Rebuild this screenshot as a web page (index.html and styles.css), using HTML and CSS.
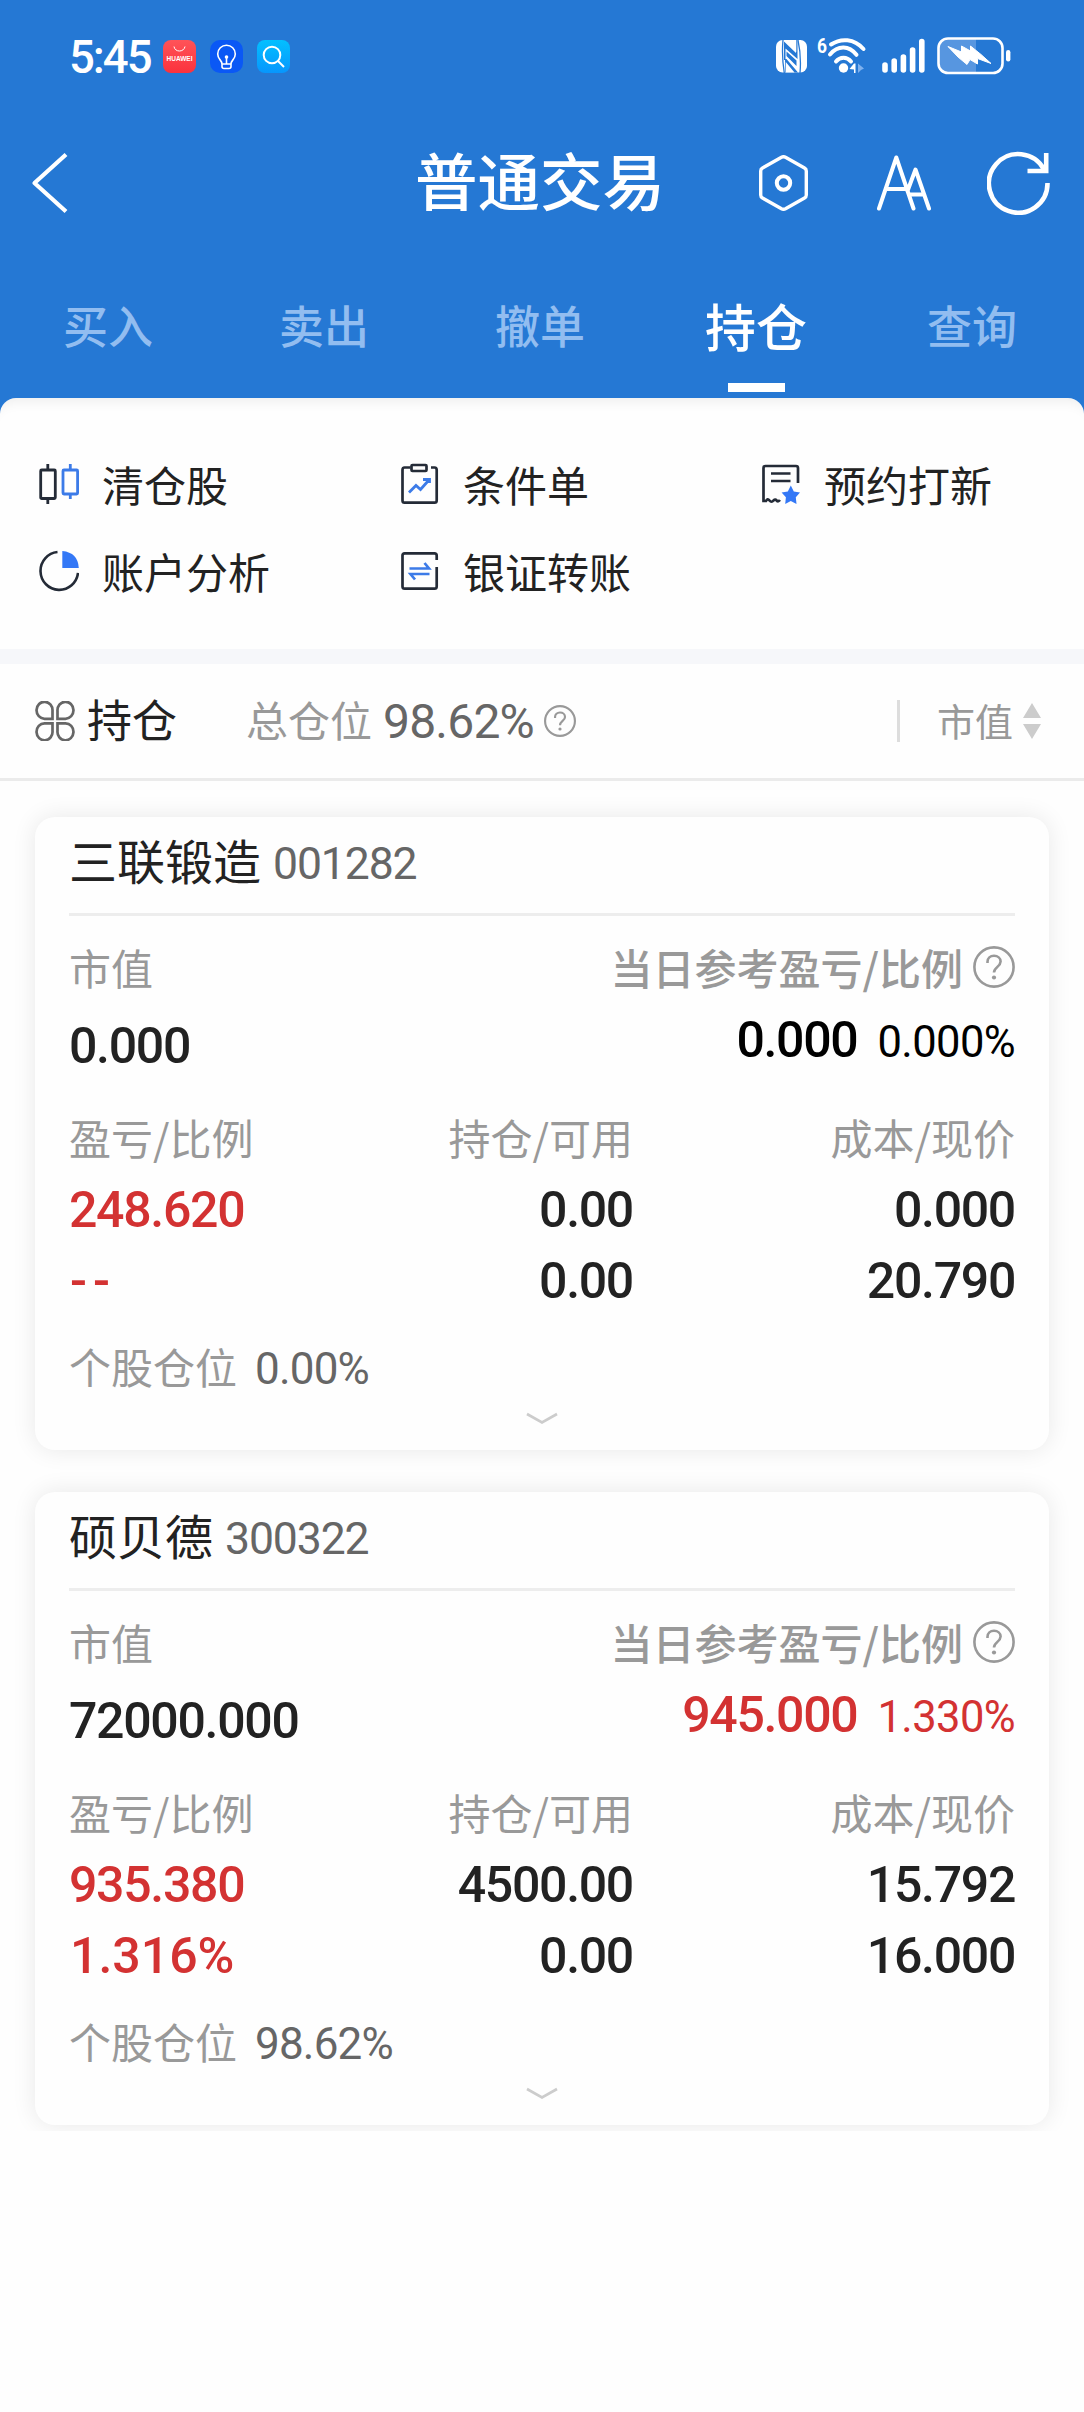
FILE: index.html
```html
<!DOCTYPE html>
<html lang="zh-CN">
<head>
<meta charset="utf-8">
<title>普通交易</title>
<link rel="stylesheet" href="styles.css">
</head>
<body>
<svg class="defs" width="0" height="0">
  <symbol id="help" viewBox="0 0 42 42">
    <circle cx="21" cy="21" r="19.6"/>
    <path d="M14.5 17v-1.2c0-3.6 2.8-6 6.5-6s6.600 2.400 6.600 5.800c0 5-6.600 5.600-6.600 11"/>
    <circle class="dot" cx="21" cy="31.500" r="2.100"/>
  </symbol>
</svg>

<header class="top">
  <div class="status">
    <span class="time">5:45</span>
    <div class="apps">
      <svg width="33" height="33" viewBox="0 0 33 33">
        <defs><linearGradient id="red" x2="0" y2="1"><stop stop-color="#ff5358"/><stop offset="1" stop-color="#fb323d"/></linearGradient></defs>
        <rect width="33" height="33" rx="8" fill="url(#red)"/>
        <path d="M11 6.500c.8 6 10 6 11 0" fill="none" stroke="#fff" stroke-width="1"/>
        <text class="brand" x="16.500" y="21" textLength="26" lengthAdjust="spacingAndGlyphs">HUAWEI</text>
      </svg>
      <svg width="33" height="33" viewBox="0 0 33 33">
        <rect width="33" height="33" rx="10" fill="#0a58f5"/>
        <g fill="none" stroke="#fff" stroke-width="1.600">
          <path d="M12 24c0-4-4.300-4.500-4.300-10a8.800 8.800 0 0 1 17.600 0c0 5.500-4.300 6-4.300 10zM12 24v2.500q0 2 2 2h5q2 0 2-2V24M16.500 17v7"/>
        </g>
        <circle cx="16.500" cy="17" r="1.800" fill="#fff"/>
      </svg>
      <svg width="33" height="33" viewBox="0 0 33 33">
        <defs><linearGradient id="cyan" x2="0" y2="1"><stop stop-color="#03c0ff"/><stop offset="1" stop-color="#0796fd"/></linearGradient></defs>
        <rect width="33" height="33" rx="8" fill="url(#cyan)"/>
        <g fill="none" stroke="#fff" stroke-width="2"><circle cx="15" cy="15" r="8.300"/><path d="M21 21l6 6"/></g>
      </svg>
    </div>
    <div class="signals">
      <svg width="31" height="33" viewBox="0 0 31 33">
        <rect width="31" height="32.500" rx="6.500" fill="#fff"/>
        <path fill="none" stroke="#2578d4" stroke-width="1.300" d="M7 0Q5.500 16 8.300 33M24 33Q25.500 16 22 0"/>
        <path fill="#2578d4" d="M8 1.500 20 13V0H21.500V19L9.500 8.500ZM10.500 11.500 20.500 20.500V26L10.500 16ZM10.500 19 22 32.500H9.300L9 19Z M8 2 9.500 3.500V20H8Z"/>
        <path fill="#fff" d="M9.800 22 18.500 32.500H9.800ZM20.300 0V12L9 0Z"/>
      </svg>
      <svg class="wifi" width="49" height="39" viewBox="0 -2 49 39">
        <text class="gen" x="0" y="16" textLength="10" lengthAdjust="spacingAndGlyphs">6</text>
        <g fill="none" stroke="#fff" stroke-width="4" stroke-linecap="round">
          <path d="M14 7.500C24 .8 37 1.500 46.500 12" />
          <path d="M13 17.500c8-9.500 19-9 26.500.300M19 24.500c4-5 11-5 15 0"/>
        </g>
        <circle cx="26.500" cy="31" r="4.700" fill="#fff"/>
        <path d="M32.500 32l4.500-5.500h1.500V36H37V32.500z" fill="#fff"/>
        <path d="M41 26.500l6 5-3 1.500-3 3z" fill="#7fb1ee"/>
      </svg>
      <svg class="bars" width="43" height="35" viewBox="0 0 43 35">
        <path d="M3 27v5M12.200 23v9M21.400 19v13M30.600 12v20M39.800 3.500V32" stroke="#fff" stroke-width="5.600" stroke-linecap="round"/>
      </svg>
      <svg class="battery" width="74" height="38" viewBox="0 0 74 38">
        <path d="M10 1.500H39V36H10Q1.500 35 1.500 27V10Q1.500 2 10 1.500" fill="#5796e0"/>
        <rect x="1.500" y="1.500" width="64" height="34.500" rx="9.500" fill="none" stroke="#fff" stroke-width="2.600"/>
        <path d="M11 9.500 24.500 15V9L33.500 14V9L44 17.500 54 26.500 40.500 21.500V27L33 22.500 30 27.500 21 20Z" fill="#fff" stroke="#fff" stroke-width="1" stroke-linejoin="round"/>
        <rect x="69" y="13" width="4.400" height="11.500" rx="2.200" fill="#fff"/>
      </svg>
    </div>
  </div>

  <div class="titlebar">
    <svg class="back" width="38" height="62" viewBox="0 0 38 62"><path d="M35 2.500 3.500 31 35 59.500" fill="none" stroke="#fff" stroke-width="4.200" stroke-linejoin="round"/></svg>
    <h1>普通交易</h1>
    <div class="tools">
      <svg width="49" height="56" viewBox="0 0 49 56" fill="none" stroke="#fff" stroke-linejoin="round">
        <path d="M22.500 2.200q2-1 4 0L45.500 13q1.800 1 1.800 3V40q0 2-1.800 3L26.500 53.800q-2 1-4 0L3.500 43q-1.800-1-1.800-3V16q0-2 1.800-3Z" stroke-width="3.400"/>
        <circle cx="24.500" cy="28" r="6.700" stroke-width="4"/>
      </svg>
      <svg width="54" height="56" viewBox="0 0 54 56" fill="none" stroke="#fff" stroke-width="4" stroke-linecap="round" stroke-linejoin="round">
        <path d="M2 53.500 19.300 2.500 36.500 53.500M8.500 34H29.500M30.500 36 38.500 14.500 52 53.500M33 39.500H46"/>
      </svg>
      <svg width="64" height="64" viewBox="0 0 64 64" fill="none" stroke="#fff" stroke-width="4.600">
        <path d="M60.500 32A29.300 29.300 0 1 1 57 18.500M40.500 20H59.200V2"/>
      </svg>
    </div>
  </div>

  <nav class="tabs">
    <a>买入</a><a>卖出</a><a>撤单</a><a class="active">持仓</a><a>查询</a>
  </nav>
</header>

<main>
  <section class="menu">
    <a><svg width="40" height="42" viewBox="0 0 40 42" fill="none" stroke-width="2.800">
      <path stroke="#242b37" d="M8.800 1v6M8.800 36v5"/><rect stroke="#242b37" x="1.700" y="7" width="14.600" height="28.500" rx="1"/>
      <path stroke="#3c7be8" d="M31.300 1v6M31.300 31v5"/><rect stroke="#3c7be8" x="24" y="7" width="14.600" height="24" rx="1"/>
    </svg>清仓股</a>
    <a><svg width="40" height="42" viewBox="0 0 40 42" fill="none" stroke="#242b37" stroke-width="2.700">
      <path d="M10.500 4.500H4.500Q2.500 4.500 2.500 7V37.500Q2.500 39.700 4.500 39.700H34.500Q36.700 39.700 36.700 37.500V7Q36.700 4.500 34.500 4.500H31"/><rect x="11.500" y="2" width="15" height="6" rx="1"/>
      <path stroke="#3c7be8" stroke-width="2.800" d="M9 29.500 16 22.500 20.500 26.500 28.500 17.500M23 16.500H29.500V20"/>
    </svg>条件单</a>
    <a><svg width="40" height="42" viewBox="0 0 40 42" fill="none" stroke="#242b37" stroke-width="2.700">
      <path d="M37 20V5Q37 3 35 3H4.500Q2.500 3 2.500 5V38H5q1.500-3 3.500-.5 2 2.500 4 0 2-2 3.500.5 1.500.8 3-1M10 10.500H29.500M10 18H29.500"/>
      <path fill="#3478f6" stroke="none" d="M29.800 22.500 32.800 28.500 39 29.500 34.800 34.300 35.500 41 29.800 38 24.200 41 24.900 34.300 20.600 29.500 26.800 28.500Z"/>
    </svg>预约打新</a>
    <a><svg width="40" height="42" viewBox="0 0 40 42" fill="none" stroke="#242b37" stroke-width="2.600">
      <path d="M18.500 2A18.800 19 0 1 0 39 23"/><path fill="#3478f6" stroke="none" d="M23.300 1Q39 2.500 39.800 18H23.300Z"/>
    </svg>账户分析</a>
    <a><svg width="40" height="42" viewBox="0 0 40 42" fill="none" stroke="#242b37" stroke-width="2.700">
      <path d="M36.700 10V5.500Q36.700 3.300 34.500 3.300H4.700Q2.500 3.300 2.500 5.500V36.500Q2.500 38.700 4.700 38.700H34.500Q36.700 38.700 36.700 36.500V17"/>
      <path stroke="#3c7be8" stroke-width="2.700" d="M9.500 18.500H29L24.500 13M29.500 24H10.500L15 29.500"/>
    </svg>银证转账</a>
  </section>

  <section class="summary">
    <svg class="clover" width="40" height="40" viewBox="0 0 40 40" fill="none" stroke="#666" stroke-width="2.700">
      <path d="M17.500 17.800V10A8 8.500 0 1 0 9.500 17.800ZM22.500 17.800V10A8 8.500 0 1 1 30.500 17.800ZM17.500 22.300V30A8 8.500 0 1 1 9.500 22.300ZM22.500 22.300V30A8 8.500 0 1 0 30.500 22.300Z"/>
    </svg>
    <h2>持仓</h2>
    <span class="total">总仓位</span>
    <span class="total-num">98.62%</span>
    <svg class="help small" width="32" height="32"><use href="#help"/></svg>
    <span class="sort">市值</span>
    <svg width="18" height="38" viewBox="0 0 18 38"><path d="M0 16 9 1 18 16ZM0 22H18L9 37Z" fill="#ccc"/></svg>
  </section>

  <section class="list">
    <article class="card">
      <div class="name"><h3>三联锻造</h3><span class="code">001282</span></div>
      <div class="row labels"><span>市值</span><span class="today">当日参考盈亏/比例<svg class="help" width="42" height="42"><use href="#help"/></svg></span></div>
      <div class="row worth"><span class="num">0.000</span><span class="day black"><b class="num">0.000</b><i>0.000%</i></span></div>
      <div class="grid heads"><span>盈亏/比例</span><span>持仓/可用</span><span>成本/现价</span></div>
      <div class="grid num"><span class="up">248.620</span><span>0.00</span><span>0.000</span>
      <span class="up dashes">--</span><span>0.00</span><span>20.790</span></div>
      <div class="share"><span>个股仓位</span><span class="pct">0.00%</span></div>
      <svg class="more" width="34" height="14" viewBox="0 0 34 14"><path d="M2 2 17 10.500 32 2" fill="none" stroke="#ccc" stroke-width="2.600"/></svg>
    </article>
    <article class="card">
      <div class="name"><h3>硕贝德</h3><span class="code">300322</span></div>
      <div class="row labels"><span>市值</span><span class="today">当日参考盈亏/比例<svg class="help" width="42" height="42"><use href="#help"/></svg></span></div>
      <div class="row worth"><span class="num">72000.000</span><span class="day up"><b class="num">945.000</b><i>1.330%</i></span></div>
      <div class="grid heads"><span>盈亏/比例</span><span>持仓/可用</span><span>成本/现价</span></div>
      <div class="grid num"><span class="up">935.380</span><span>4500.00</span><span>15.792</span>
      <span class="up ratio">1.316%</span><span>0.00</span><span>16.000</span></div>
      <div class="share"><span>个股仓位</span><span class="pct">98.62%</span></div>
      <svg class="more" width="34" height="14" viewBox="0 0 34 14"><path d="M2 2 17 10.500 32 2" fill="none" stroke="#ccc" stroke-width="2.600"/></svg>
    </article>
  </section>
</main>
</body>
</html>
```
FILE: styles.css
```css
* { box-sizing: border-box; margin: 0; padding: 0; }

body {
  width: 1084px;
  min-height: 2412px;
  background: #fefefe;
  color: #222;
  font: 400 42px/60px "Noto Sans CJK SC", sans-serif;
  overflow-x: hidden;
}

svg { display: block; flex: none; }
.defs { position: absolute; }
h1, h2, h3, b, i { font-weight: 400; font-style: normal; }

/* header */
.top { height: 422px; background: #2578d4; color: #fff; }

.status { display: flex; align-items: center; height: 113px; padding-left: 69px; }
.time {
  width: 94px;
  font: 500 45.500px/60px Roboto, sans-serif;
  letter-spacing: -2px;
  padding-top: 3px;
}
.apps { display: flex; gap: 14px; }
.signals { display: flex; align-items: center; margin-left: 486px; }
.brand { font: 700 6.500px "Liberation Sans", sans-serif; fill: #fff; text-anchor: middle; }
.gen { font: 700 21px Roboto, sans-serif; fill: #fff; }
.wifi { margin: -5px 0 0 10px; overflow: visible; }
.bars { margin-left: 16px; margin-top: -2px; }
.battery { margin-left: 12px; margin-top: -2px; }

.titlebar { display: flex; align-items: center; height: 140px; padding-left: 31px; }
.back { margin-bottom: 1px; }
.titlebar h1 {
  margin-left: 346px;
  width: 256px;
  font-size: 62.500px;
  line-height: 90px;
  font-weight: 500;
  white-space: nowrap;
  margin-top: -9px;
}
.tools { display: flex; align-items: center; margin-left: 88px; }
.tools svg:nth-child(2) { margin-left: 69px; }
.tools svg:nth-child(3) { margin-left: 56px; }

.tabs { display: flex; height: 145px; }
.tabs a {
  display: flex;
  flex-direction: column;
  align-items: center;
  width: 216px;
  padding-top: 37px;
  font-size: 45px;
  line-height: 70px;
  font-weight: 500;
  color: #92bdf0;
}
.tabs .active { color: #fff; font-size: 51px; }
.tabs .active::after { content: ""; width: 57px; height: 9px; margin-top: 23px; background: #fff; }

/* shortcuts */
.menu {
  display: grid;
  grid-template-columns: repeat(3, 361px);
  grid-auto-rows: 87px;
  align-content: start;
  height: 251px;
  margin-top: -24px;
  padding: 43px 0 0 39px;
  background: #fefefe;
  border-radius: 16px 16px 0 0;
  box-shadow: inset 0 16px 14px -14px rgba(0, 0, 0, .08);
}
.menu a { display: flex; align-items: center; gap: 23px; height: 87px; padding-bottom: 1px; }

/* summary */
.summary {
  display: flex;
  align-items: center;
  height: 132px;
  border-top: 15px solid #f6f7fa;
  border-bottom: 3px solid #ebebeb;
  padding-left: 35px;
}
.summary h2 { font-size: 45px; line-height: 60px; margin: -5px 0 0 12px; width: 90px; white-space: nowrap; }
.total { width: 127px; margin: -5px 0 0 69px; color: #999; }
.total-num {
  width: 161px;
  margin: 2px 0 0 10px;
  font: 48px/60px Roboto, sans-serif;
  letter-spacing: -.8px;
  color: #666;
}
.sort {
  margin-left: 321px;
  padding-left: 37px;
  width: 126px;
  border-left: 3px solid #ddd;
  color: #999;
  font-size: 38px;
  line-height: 39px;
  padding-bottom: 3px;
}
.help { fill: none; stroke: #999; stroke-width: 2.600px; }
.help.small { stroke-width: 2.800px; }
.dot { fill: #999; stroke: none; }

/* holdings */
.list { display: grid; gap: 42px; padding: 36px 35px 6px; overflow: hidden; }
.card {
  height: 633px;
  padding: 0 34px;
  border-radius: 20px;
  background: #fefefe;
  box-shadow: 0 0 24px rgba(0, 0, 0, .09);
}
.name { display: flex; height: 99px; border-bottom: 3px solid #ededed; }
.name h3 { font-size: 48px; line-height: 82px; padding-top: 1px; }
.code {
  margin-left: 12px;
  padding-top: 6px;
  font: 44.500px/82px Roboto, sans-serif;
  letter-spacing: -1.100px;
  color: #666;
}
.row { display: flex; justify-content: space-between; height: 60px; }
.labels { margin-top: 21px; color: #999; }
.today { display: flex; gap: 10px; font-weight: 500; }
.today .help { margin-top: 9px; }
.num { font: 500 50px/60px Roboto, sans-serif; letter-spacing: -1.300px; }
.worth { margin-top: 19px; }
.day { display: flex; gap: 20px; }
.day b { margin-top: -6px; }
.day i { margin-top: -3px; font: 43.500px/60px Roboto, sans-serif; letter-spacing: -.6px; }
.black { color: #000; }
.up { color: #d33232; }
.grid { display: grid; grid-template-columns: 281px 283px 382px; }
.grid span:not(:nth-child(3n+1)) { text-align: right; }
.heads { margin-top: 31px; color: #999; }
.grid.num { margin-top: 8px; line-height: 71px; }
.grid .dashes { letter-spacing: 6px; padding-left: 1px; }
.grid .ratio { letter-spacing: 0; padding-left: 1px; }
.share { display: flex; height: 60px; margin-top: 19px; color: #999; }
.pct {
  margin: 3px 0 0 18px;
  font: 44px/60px Roboto, sans-serif;
  letter-spacing: -.8px;
  color: #666;
}
.more { margin: 16px auto 0; }
```
